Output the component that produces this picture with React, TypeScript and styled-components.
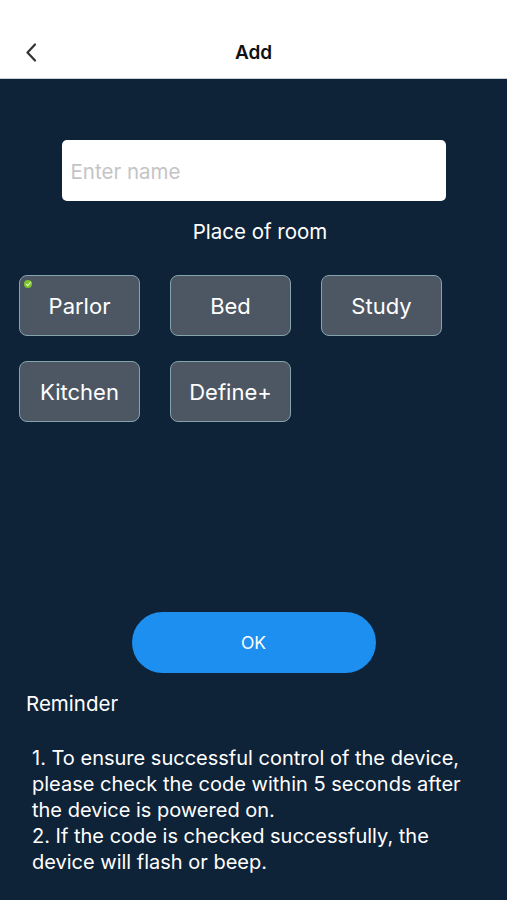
import * as React from 'react';
import styled, { createGlobalStyle } from 'styled-components';

const rooms = ['Parlor', 'Bed', 'Study', 'Kitchen', 'Define+'];

function App() {
  const [selected, setSelected] = React.useState<string>('Parlor');
  const [name, setName] = React.useState<string>('');

  return (
    <>
      <GlobalStyle />
      <Screen>
        <Header>
          <BackButton aria-label="Back">
            <svg width="12" height="19" viewBox="0 0 12 19" fill="none">
              <path
                d="M10 1.5L2.5 9.5L10 17.5"
                stroke="#333"
                strokeWidth="2.2"
                strokeLinecap="round"
                strokeLinejoin="round"
              />
            </svg>
          </BackButton>
          <Title>Add</Title>
        </Header>

        <Body>
          <NameInput
            placeholder="Enter name"
            value={name}
            onChange={(e) => setName(e.target.value)}
          />
          <SectionLabel>Place of room</SectionLabel>

          <RoomGrid>
            {rooms.map((room) => (
              <RoomButton key={room} onClick={() => setSelected(room)}>
                {selected === room && <CheckDot />}
                {room}
              </RoomButton>
            ))}
          </RoomGrid>

          <OkButton>OK</OkButton>

          <ReminderTitle>Reminder</ReminderTitle>
          <ReminderText>
            1. To ensure successful control of the device, please check the code
            within 5 seconds after the device is powered on.
            <br />
            2. If the code is checked successfully, the device will flash or beep.
          </ReminderText>
        </Body>
      </Screen>
    </>
  );
}

const GlobalStyle = createGlobalStyle`
  body {
    margin: 0;
    background: #0f2338;
    font-family: Inter, "Noto Sans", "Liberation Sans", sans-serif;
  }
`;

const Screen = styled.div`
  width: 507px;
  min-height: 900px;
  background: #0f2338;
  display: flex;
  flex-direction: column;
`;

const Header = styled.header`
  position: relative;
  height: 79px;
  background: #ffffff;
  display: flex;
  align-items: flex-end;
  justify-content: center;
  padding-bottom: 13px;
  box-sizing: border-box;
  border-bottom: 1px solid #c8ced4;
`;

const BackButton = styled.button`
  position: absolute;
  left: 25px;
  bottom: 16px;
  border: 0;
  padding: 0;
  background: none;
  display: flex;
`;

const Title = styled.h1`
  margin: 0;
  font-size: 19px;
  font-weight: 600;
  color: #111;
  line-height: 24px;
`;

const Body = styled.main`
  display: flex;
  flex-direction: column;
  padding: 61px 0 0;
`;

const NameInput = styled.input`
  align-self: center;
  width: 384px;
  height: 61px;
  box-sizing: border-box;
  border: 0;
  border-radius: 5px;
  background: #ffffff;
  padding: 2px 9px 0;
  font-family: inherit;
  font-size: 20.5px;
  color: #222;
  outline: none;

  &::placeholder {
    color: #c4c4c6;
  }
`;

const SectionLabel = styled.div`
  margin-top: 18px;
  padding-left: 13px;
  text-align: center;
  font-size: 20.5px;
  line-height: 26px;
  color: #ffffff;
`;

const RoomGrid = styled.div`
  display: grid;
  grid-template-columns: repeat(3, 121px);
  column-gap: 30px;
  row-gap: 25px;
  padding-left: 19px;
  margin-top: 30px;
`;

const RoomButton = styled.button`
  position: relative;
  height: 61px;
  box-sizing: border-box;
  border: 1.5px solid #84a3ad;
  border-radius: 8px;
  background: #4d5763;
  color: #ffffff;
  font-family: inherit;
  font-size: 22px;
  padding: 0;
  cursor: pointer;
`;

const CheckDot = styled.span`
  position: absolute;
  top: 4px;
  left: 4px;
  width: 8px;
  height: 8px;
  border-radius: 50%;
  background: #7cc62a;

  &::after {
    content: '';
    position: absolute;
    left: 2.5px;
    top: 1.3px;
    width: 2px;
    height: 3.5px;
    border: solid #e8ffd0;
    border-width: 0 1px 1px 0;
    transform: rotate(40deg);
  }
`;

const OkButton = styled.button`
  align-self: center;
  margin-top: 190px;
  width: 244px;
  height: 61px;
  border: 0;
  border-radius: 31px;
  background: #1c8ff0;
  color: #ffffff;
  font-family: inherit;
  font-size: 17.5px;
  cursor: pointer;
`;

const ReminderTitle = styled.div`
  margin-top: 18px;
  padding-left: 26px;
  font-size: 20.5px;
  line-height: 26px;
  color: #ffffff;
`;

const ReminderText = styled.p`
  margin: 28px 0 0;
  padding: 0 24px 0 32px;
  font-size: 20px;
  line-height: 26px;
  color: #ffffff;
`;

export default App;
